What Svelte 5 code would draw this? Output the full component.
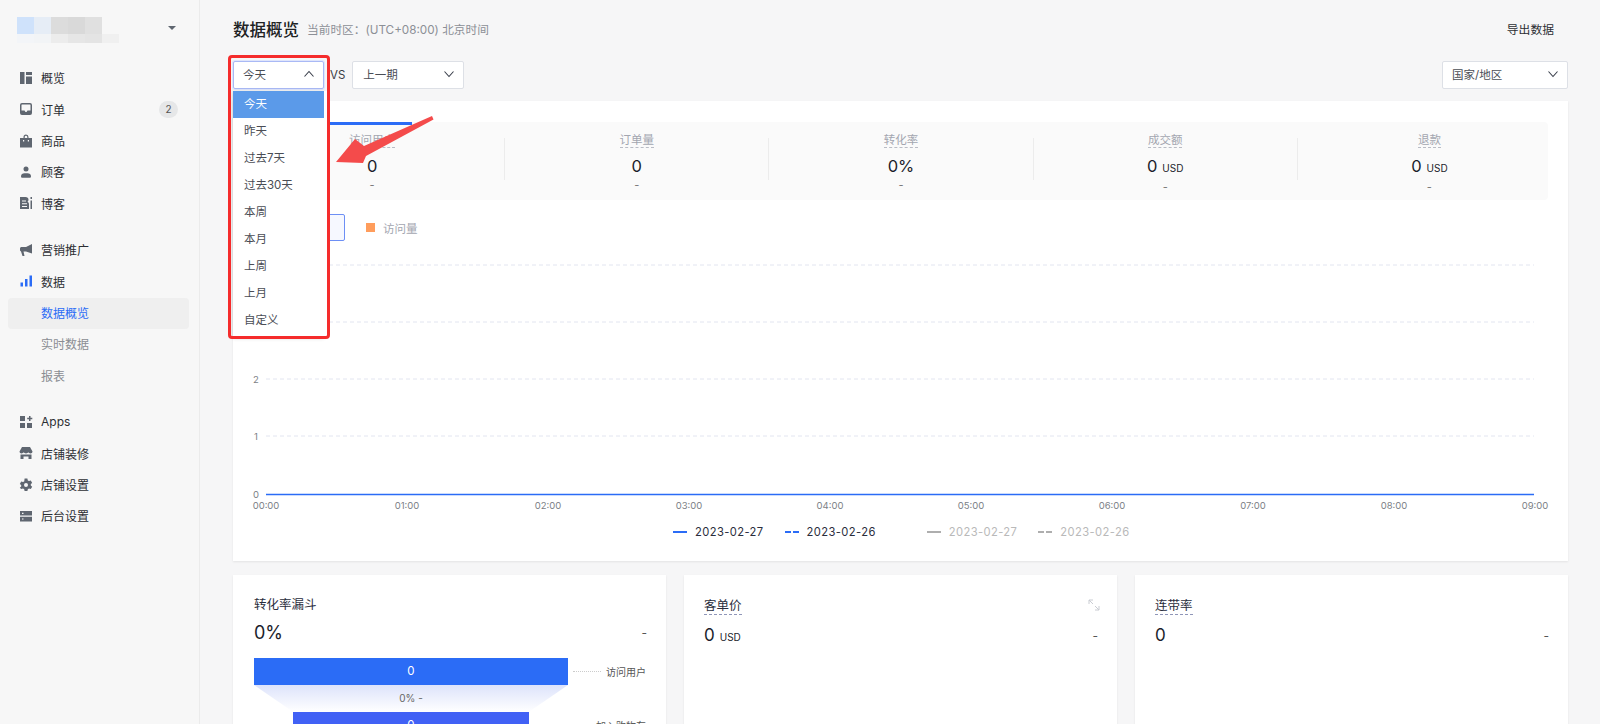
<script>
  const navGroups = [
    [
      { label: '概览', icon: 'overview' },
      { label: '订单', icon: 'inbox', badge: 2 },
      { label: '商品', icon: 'bag' },
      { label: '顾客', icon: 'person' },
      { label: '博客', icon: 'blog' },
    ],
    [
      { label: '营销推广', icon: 'horn' },
      { label: '数据', icon: 'bars', blue: true },
      { label: '数据概览', sub: true, active: true },
      { label: '实时数据', sub: true },
      { label: '报表', sub: true },
    ],
    [
      { label: 'Apps', icon: 'apps' },
      { label: '店铺装修', icon: 'store' },
      { label: '店铺设置', icon: 'gear' },
      { label: '后台设置', icon: 'server' },
    ],
  ];

  const ranges = ['今天', '昨天', '过去7天', '过去30天', '本周', '本月', '上周', '上月', '自定义'];

  const stats = [
    { label: '访问用户', value: '0' },
    { label: '订单量', value: '0' },
    { label: '转化率', value: '0%' },
    { label: '成交额', value: '0', unit: 'USD' },
    { label: '退款', value: '0', unit: 'USD' },
  ];

  // the labels of the two top rows sit behind the open dropdown
  const gridRows = [
    { y: 265 },
    { y: 322 },
    { y: 379, n: 2 },
    { y: 436, n: 1 },
  ];
  const hours = ['00:00', '01:00', '02:00', '03:00', '04:00', '05:00', '06:00', '07:00', '08:00', '09:00'];

  const legend = [
    { text: '2023-02-27', muted: false, dashed: false },
    { text: '2023-02-26', muted: false, dashed: true },
    { text: '2023-02-27', muted: true, dashed: false },
    { text: '2023-02-26', muted: true, dashed: true },
  ];
</script>

{#snippet caret(up)}
  <svg class="chev" width="12" height="12" viewBox="0 0 12 12">
    <path d={up ? 'M1.5 8.5 6 3.5l4.5 5' : 'M1.5 3.5 6 8.5l4.5-5'} fill="none" stroke="#3a3f4b" stroke-width="1.1" />
  </svg>
{/snippet}

{#snippet navIcon(name, color)}
  <svg width="14" height="14" viewBox="0 0 14 14" fill={color}>
    {#if name === 'overview'}
      <path d="M1 1h4.500v12H1zM7 1h6v3H7zM7 5.500h6V13H7z" />
    {:else if name === 'inbox'}
      <path fill-rule="evenodd" d="M3 1h8a2 2 0 0 1 2 2v8a2 2 0 0 1-2 2H3a2 2 0 0 1-2-2V3a2 2 0 0 1 2-2zm-.5 2v5.500h3L6.500 10h1l1-1.500h3V3a.5.5 0 0 0-.5-.5H3a.5.5 0 0 0-.5.5z" />
    {:else if name === 'bag'}
      <path fill-rule="evenodd" d="M4.500 4V3a2.500 2.500 0 0 1 5 0v1H13v9.500H1V4zM5.700 4h2.600V3a1.300 1.300 0 0 0-2.600 0zM4 6v1.500h1.200V6zm4.800 0v1.500H10V6z" />
    {:else if name === 'person'}
      <circle cx="7" cy="4" r="2.500" />
      <path d="M2 11.500C2 9.500 3.500 8.300 5.500 8.300h3c2 0 3.500 1.200 3.500 3.200 0 .8-.6 1.300-1.300 1.300H3.300C2.600 12.800 2 12.300 2 11.500z" />
    {:else if name === 'blog'}
      <path fill-rule="evenodd" d="M1 1h5.500c1.800 0 3 1 3 2.700 0 .9-.4 1.600-1 2.100 1 .5 1.500 1.400 1.500 2.600V13H1zm2 3.500v1h4v-1zm0 2.800v1h5v-1zm0 2.600v1h5v-1z" />
      <path d="M11.500 1h1.500v2h-1.500zM11.500 4.500h1.500V13h-1.500z" />
    {:else if name === 'horn'}
      <path d="M13 1v9.500L7 8.500H4.500l1 4.500H3.500L2 8.400C1.200 8.100 1 7.500 1 7V5.500c0-.9.700-1.500 1.500-1.500H7z" />
    {:else if name === 'bars'}
      <path d="M1.500 8.500h2.500v4H1.500zM6 5h2.500v7.500H6zM10.500 1.500H13v11h-2.500z" />
    {:else if name === 'apps'}
      <path d="M1 1h5v5H1zM1 8h5v5H1zM8 8h5v5H8zM10 1h1.500v1.800h1.800v1.400h-1.800V6H10V4.200H8.200V2.800H10z" />
    {:else if name === 'store'}
      <path d="M3 1h8l2.500 4.500c0 1.200-.9 2-2 2s-1.700-.5-2.200-1.200C8.800 7 8 7.500 7 7.500S5.200 7 4.700 6.300C4.200 7 3.500 7.500 2.500 7.500s-2-.8-2-2z" />
      <path d="M1.500 8.500h11V13H9.500V10.500h-5V13h-3z" />
    {:else if name === 'gear'}
      <path fill-rule="evenodd" d="M5.600.6h2.800l.4 1.800 1.200.7 1.800-.6 1.400 2.400-1.400 1.200v1.400l1.400 1.200-1.400 2.400-1.800-.6-1.200.7-.4 1.800H5.600l-.4-1.800-1.200-.7-1.800.6L.8 9.700l1.400-1.200V7.100L.8 5.900l1.400-2.400 1.800.6 1.200-.7zM7 5a2 2 0 1 0 0 4 2 2 0 0 0 0-4z" />
    {:else if name === 'server'}
      <path fill-rule="evenodd" d="M1 2h12v4.500H1zM1 7.800h12V12.500H1zM3 3.700v1.200h1.500V3.700zm0 5.700v1.200h1.500V9.400z" />
    {/if}
  </svg>
{/snippet}

<div class="page">
  <aside class="sidebar">
    <div class="brand">
      <div class="mosaic" aria-hidden="true">
        <i style="background:#cfe2fb"></i><i style="background:#e6edf6"></i><i style="background:#dcdcdc"></i><i style="background:#d9d9d9"></i><i style="background:#e0e0e0"></i><i></i>
        <i style="background:#f3f5f8"></i><i style="background:#f2f4f6"></i><i style="background:#ececec"></i><i style="background:#e6e6e6"></i><i style="background:#e4e4e4"></i><i style="background:#f0f0f0"></i>
      </div>
      <span class="brand-caret"></span>
    </div>

    {#each navGroups as group}
      <nav class="group">
        {#each group as item}
          <div class="item" class:sub={item.sub} class:active={item.active}>
            {#if item.icon}
              <span class="icon">{@render navIcon(item.icon, item.blue ? '#2b6cf6' : '#5f6670')}</span>
            {/if}
            <span class="label">{item.label}</span>
            {#if item.badge}<span class="badge">{item.badge}</span>{/if}
          </div>
        {/each}
      </nav>
    {/each}
  </aside>

  <main class="main">
    <header class="head">
      <h1>数据概览</h1>
      <span class="tz">当前时区：(UTC+08:00) 北京时间</span>
      <span class="export">导出数据</span>
    </header>

    <div class="filters">
      <div class="select focus">今天 {@render caret(true)}</div>
      <span class="vs">VS</span>
      <div class="select period">上一期 {@render caret(false)}</div>
      <div class="select region">国家/地区 {@render caret(false)}</div>
    </div>

    <section class="card overview">
      <div class="stats">
        <div class="stat-grid">
          {#each stats as s, i}
            <div class="stat" class:first={i === 0}>
              <div class="stat-label"><span>{s.label}</span></div>
              <div class="stat-value">{s.value}{#if s.unit}<small>{s.unit}</small>{/if}</div>
              <div class="stat-dash">-</div>
            </div>
          {/each}
        </div>
      </div>

      <div class="series">
        <div class="series-btn">访问用户</div>
        <span class="swatch"></span>
        <span class="series-label">访问量</span>
      </div>

      <svg class="chart" width="1335" height="270" viewBox="233 245 1335 270">
        {#each gridRows as r}
          <line x1="266" x2="1534" y1={r.y} y2={r.y} stroke="#e2e5f0" stroke-dasharray="4 3" />
          {#if r.n}<text x="256" y={r.y + 4} text-anchor="middle" class="tick">{r.n}</text>{/if}
        {/each}
        <text x="256" y="498" text-anchor="middle" class="tick">0</text>
        <line x1="266" x2="1534" y1="494.500" y2="494.500" stroke="#2b6cf6" stroke-width="1.500" />
        {#each hours as h, i}
          <text x={266 + i * 141} y="509" text-anchor="middle" class="tick">{h}</text>
        {/each}
      </svg>

      <div class="legend">
        {#each legend as l, i}
          <span class="legend-item" class:muted={l.muted} class:gap={i === 2}>
            <i class:dash={l.dashed}></i>{l.text}
          </span>
        {/each}
      </div>
    </section>

    <div class="lower">
      <section class="card metric">
        <h2>转化率漏斗</h2>
        <div class="row big"><span>0%</span><em>-</em></div>
        <div class="funnel">
          <div class="bar-row">
            <div class="bar b1">0</div>
            <span class="leader"></span>
            <span class="bar-name">访问用户</span>
          </div>
          <div class="taper"><span>0% -</span></div>
          <div class="bar-row">
            <div class="bar b2">0</div>
            <span class="bar-name second">加入购物车</span>
          </div>
        </div>
      </section>

      <section class="card metric">
        <h2 class="dotted"><u>客单价</u></h2>
        <svg class="expand" width="12" height="12" viewBox="0 0 12 12" fill="none" stroke="#c9ccd2" stroke-width="1">
          <path d="M1 5V1h4M1 1l4 4M11 7v4H7M11 11 7 7" />
        </svg>
        <div class="row"><span class="val">0<small>USD</small></span><em>-</em></div>
      </section>

      <section class="card metric">
        <h2 class="dotted"><u>连带率</u></h2>
        <div class="row"><span class="val">0</span><em>-</em></div>
      </section>
    </div>
  </main>

  <div class="dropdown">
    {#each ranges as r, i}
      <div class="option" class:on={i === 0}>{r}</div>
    {/each}
  </div>

  <div class="redbox"></div>

  <svg class="arrow" width="100" height="54" viewBox="0 0 100 54">
    <path d="M0 49 19 26 28 33 96 3 97.500 6.500 30 43 27 50z" fill="#f44b4b" />
  </svg>
</div>

<style>
  :global(body) {
    margin: 0;
    background: #f6f6f7;
    font-family: Inter, "Noto Sans CJK SC", sans-serif;
    color: #202223;
  }

  .page {
    position: relative;
    display: flex;
    height: 724px;
    overflow: hidden;
  }

  .sidebar {
    flex: none;
    width: 199px;
    border-right: 1px solid #ebebeb;
    background: #f7f7f7;
  }

  .brand {
    display: flex;
    justify-content: space-between;
    align-items: flex-start;
    height: 63.300px;
    box-sizing: border-box;
    padding: 17px 23px 0 17px;
  }

  .mosaic {
    display: grid;
    grid-template-columns: repeat(6, 17px);
    grid-template-rows: 17px 9px;
  }

  .brand-caret {
    width: 0;
    height: 0;
    margin-top: 9px;
    border: 4px solid transparent;
    border-top: 4px solid #5f6670;
    border-bottom: 0;
  }

  .group {
    margin-bottom: 15.500px;
  }

  .item {
    display: flex;
    align-items: center;
    height: 31.300px;
    margin: 0 14px 0 8px;
    padding: 0 7px 2px 11px;
    font-size: 12px;
    color: #2c2e33;
    box-sizing: border-box;
  }

  .icon {
    display: flex;
    width: 22px;
    flex: none;
  }

  .label {
    flex: 1;
  }

  .sub {
    padding-left: 33px;
    color: #8a8d93;
  }

  .active {
    color: #2b6cf6;
    background: #efefef;
    border-radius: 4px;
    margin-right: 10px;
  }

  .badge {
    width: 19px;
    height: 17px;
    border-radius: 9px;
    background: #e6e7e8;
    color: #555;
    font-size: 10px;
    line-height: 17px;
    text-align: center;
  }

  .main {
    flex: 1;
    min-width: 0;
    padding: 0 32px 0 33px;
  }

  .head {
    display: flex;
    align-items: center;
    height: 57px;
  }

  h1 {
    margin: 0 8px 0 0;
    font-size: 16.500px;
    font-weight: 500;
    color: #202223;
  }

  .tz {
    font-size: 11.700px;
    color: #8c8f96;
  }

  .export {
    margin-left: auto;
    margin-right: 14px;
    font-size: 11.800px;
    color: #2c2e33;
  }

  .filters {
    display: flex;
    align-items: center;
    height: 30px;
    margin-top: 3px;
    margin-bottom: 11px;
  }

  .select {
    display: flex;
    justify-content: space-between;
    align-items: center;
    height: 28px;
    padding: 0 8px 2px 10px;
    box-sizing: border-box;
    border: 1px solid #dde0e6;
    border-radius: 2px;
    background: #fff;
    font-size: 11.500px;
    color: #4a4d55;
  }

  .focus {
    width: 91px;
    padding-left: 9px;
    border-color: #a9b9f5;
    box-shadow: 0 0 0 1px #dfe5fb;
  }

  .vs {
    margin: 0 7px 0 6px;
    font-size: 11.500px;
    color: #3a3d44;
  }

  .period {
    width: 112px;
  }

  .region {
    width: 126px;
    margin-left: auto;
    padding-left: 9px;
  }

  .card {
    background: #fff;
    box-shadow: 0 1px 2px rgba(0, 0, 0, 0.08);
  }

  .overview {
    height: 460px;
    padding: 21px 20px 0;
    box-sizing: border-box;
    position: relative;
  }

  .stats {
    height: 78px;
    background: #fafafa;
    border-radius: 4px;
  }

  .stat-grid {
    display: grid;
    grid-template-columns: repeat(5, 1fr);
    align-items: center;
    height: 100%;
    margin: 0 -13px;
  }

  .stat {
    position: relative;
    height: 42px;
    margin-top: -4px;
    text-align: center;
    border-left: 1px solid #ececec;
  }

  .stat.first {
    border-left: 0;
  }

  .stat.first::before {
    content: '';
    position: absolute;
    left: 0;
    width: 172px;
    top: -16px;
    height: 3px;
    background: #2b6cf6;
  }

  .stat-label {
    margin-top: -6px;
    font-size: 11.500px;
    line-height: 16px;
    color: #a3a6b0;
  }

  .stat-label span {
    border-bottom: 1px dashed #b9bcc5;
  }

  .stat-value {
    margin-top: 9px;
    font-size: 16.500px;
    line-height: 18px;
    color: #1b1d2b;
  }

  small {
    margin-left: 5px;
    font-size: 10px;
  }

  .stat-dash {
    margin-top: 4px;
    font-size: 11px;
    line-height: 12px;
    color: #777;
  }

  .series {
    display: flex;
    align-items: center;
    height: 27px;
    margin-top: 14px;
  }

  .series-btn {
    width: 92px;
    height: 27px;
    box-sizing: border-box;
    border: 1px solid #6d8ff5;
    border-radius: 2px;
    background: #f6f8ff;
    line-height: 25px;
    text-align: center;
    font-size: 11.500px;
    color: #555;
  }

  .swatch {
    width: 9px;
    height: 9px;
    margin-left: 21px;
    background: #ff9d5c;
  }

  .series-label {
    margin-left: 8px;
    font-size: 11.500px;
    color: #a3a6b0;
  }

  .chart {
    display: block;
    margin: 4px -20px 0;
  }

  .tick {
    font-size: 9.500px;
    fill: #7c7f86;
  }

  .legend {
    display: flex;
    margin-left: 420px;
    margin-top: 7px;
    gap: 21px;
  }

  .legend-item {
    display: flex;
    align-items: center;
    gap: 8px;
    font-size: 11.200px;
    letter-spacing: 0.400px;
    line-height: 20px;
    color: #2a2d3c;
  }

  .legend-item i {
    width: 14px;
    height: 2px;
    background: #2b6cf6;
  }

  .legend-item i.dash {
    background: repeating-linear-gradient(90deg, #2b6cf6 0 6px, transparent 6px 8px);
  }

  .legend-item.muted {
    color: #b9b9b9;
  }

  .legend-item.muted i {
    background: #aeaeae;
  }

  .legend-item.muted i.dash {
    background: repeating-linear-gradient(90deg, #aeaeae 0 6px, transparent 6px 8px);
  }

  .legend-item.gap {
    margin-left: 30px;
  }

  .lower {
    display: flex;
    gap: 18px;
    margin-top: 14px;
  }

  .metric {
    position: relative;
    flex: 1;
    height: 200px;
    padding: 20px 20px 20px 21px;
    box-sizing: border-box;
  }

  h2 {
    margin: 0;
    font-size: 12.500px;
    line-height: 20px;
    font-weight: 400;
    color: #2a2d3c;
  }

  h2.dotted {
    margin: 1px 0 0 -1px;
  }

  u {
    text-decoration: none;
    border-bottom: 1px dashed #8f96b8;
    padding-bottom: 1px;
  }

  .expand {
    position: absolute;
    top: 24px;
    right: 17px;
  }

  .row {
    display: flex;
    justify-content: space-between;
    align-items: center;
    margin-top: 7px;
    height: 24px;
    font-size: 12px;
    color: #555;
  }

  .dotted + .row,
  .expand + .row {
    margin-left: -1px;
  }

  em {
    font-style: normal;
    margin-right: -1px;
  }

  .val {
    font-size: 17px;
    color: #1b1d2b;
  }

  .big {
    margin-top: 4px;
    height: 26px;
  }

  .big span {
    font-size: 18px;
    color: #1b1d2b;
  }

  .funnel {
    margin-top: 13px;
  }

  .bar-row {
    position: relative;
    display: flex;
    align-items: center;
  }

  .bar {
    height: 27px;
    line-height: 27px;
    text-align: center;
    color: #fff;
    font-size: 11.500px;
  }

  .b1 {
    width: 314px;
    background: #2b6cf6;
  }

  .b2 {
    width: 236px;
    margin-left: 39px;
    background: #4161f5;
  }

  .leader {
    width: 28px;
    margin-left: 5px;
    border-top: 1px dotted #ccc;
  }

  .bar-name {
    margin-left: auto;
    font-size: 10px;
    color: #555;
  }

  .taper {
    width: 314px;
    height: 27px;
    clip-path: polygon(0 0, 100% 0, 87.500% 100%, 12.500% 100%);
    background: linear-gradient(#dde3fb, #fff);
    text-align: center;
    font-size: 10px;
    line-height: 27px;
    color: #666;
  }

  .dropdown {
    position: absolute;
    left: 233px;
    top: 91px;
    width: 91px;
    padding-bottom: 3px;
    background: #fff;
    box-shadow: 3px 0 0 #fff, 0 1px 4px rgba(0, 0, 0, 0.2);
  }

  .option {
    height: 27px;
    padding-left: 11px;
    font-size: 11.500px;
    line-height: 27px;
    color: #4a4d55;
  }

  .option.on {
    background: #5b9ae9;
    color: #fff;
  }

  .redbox {
    position: absolute;
    left: 228px;
    top: 55px;
    width: 102px;
    height: 284px;
    box-sizing: border-box;
    border: 3px solid #f52c2c;
    border-radius: 4px;
  }

  .arrow {
    position: absolute;
    left: 336px;
    top: 113px;
  }
</style>
